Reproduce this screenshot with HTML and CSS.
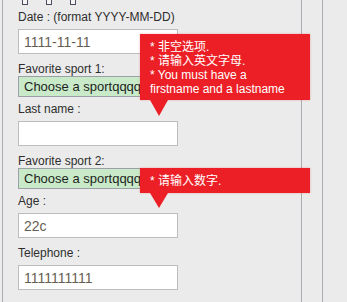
FILE: index.html
```html
<!DOCTYPE html>
<html lang="en">
<head>
<meta charset="utf-8">
<title>Form validation</title>
<link rel="stylesheet" href="styles.css">
</head>
<body>
<div class="page">
  <div class="panel">
    <div class="checks">
      <span class="box"></span><span class="box"></span><span class="box"></span>
    </div>
    <form class="form">
      <div class="field field--first">
        <label class="lbl">Date : (format YYYY-MM-DD)</label>
        <input class="txt" type="text" value="1111-11-11">
      </div>
      <div class="field field--after-input field--select">
        <label class="lbl">Favorite sport 1:</label>
        <select class="sel"><option>Choose a sportqqqqqqqqqqqqqqqqqqqq</option></select>
      </div>
      <div class="field field--after-select">
        <label class="lbl">Last name :</label>
        <input class="txt" type="text" value="">
      </div>
      <div class="field field--after-input field--select">
        <label class="lbl">Favorite sport 2:</label>
        <select class="sel"><option>Choose a sportqqqqqqqqqqqqqqqqqqqq</option></select>
      </div>
      <div class="field field--after-select">
        <label class="lbl">Age :</label>
        <input class="txt" type="text" value="22c">
      </div>
      <div class="field field--after-input">
        <label class="lbl">Telephone :</label>
        <input class="txt" type="text" value="1111111111">
      </div>
    </form>

    <div class="tip tip--name">
      <div class="tip-line">* 非空选项.</div>
      <div class="tip-line">* 请输入英文字母.</div>
      <div class="tip-line">* You must have a</div>
      <div class="tip-line">firstname and a lastname</div>
      <span class="tip-arrow"></span>
    </div>
    <div class="tip tip--age">
      <div class="tip-line">* 请输入数字.</div>
      <span class="tip-arrow tip-arrow--short"></span>
    </div>
  </div>
  <div class="gutter"></div>
</div>
</body>
</html>
```

FILE: styles.css
```css
html, body {
  margin: 0;
  padding: 0;
}

body {
  background: #ebebeb;
  font-family: "Liberation Sans", "Noto Sans CJK SC", sans-serif;
  color: #333;
  overflow: hidden;
}

.page {
  display: flex;
  height: 302px;
}

.panel {
  position: relative;
  box-sizing: border-box;
  width: 300px;
  margin-left: 2px;
  border-left: 1px solid #abacb3;
  border-right: 1px solid #abacb3;
  padding-left: 15px;
}

.gutter {
  box-sizing: border-box;
  width: 21px;
  border-right: 1px solid #abacb3;
}

.checks {
  display: flex;
  gap: 18px;
  padding-left: 4px;
  height: 5px;
}

.box {
  box-sizing: border-box;
  width: 6px;
  height: 5px;
  border: 1px solid #4a4d5e;
  border-top: none;
  background: #f4f4f4;
}

.form {
  display: flex;
  flex-direction: column;
  margin: 0;
}

.field {
  display: flex;
  flex-direction: column;
  align-items: flex-start;
}

.field--first { margin-top: 5px; }
.field--after-input { margin-top: 8px; }
.field--after-select { margin-top: 5px; }

.lbl {
  font-size: 12px;
  line-height: 14px;
  height: 14px;
  color: #2e2e2e;
}

.txt {
  box-sizing: border-box;
  margin: 5px 0 0;
  width: 160px;
  height: 25px;
  padding: 0 5px;
  border: 1px solid #bdbdbd;
  background: #fff;
  font-family: "Liberation Sans", sans-serif;
  font-size: 14px;
  color: #665e52;
  outline: none;
}

.sel {
  appearance: none;
  -webkit-appearance: none;
  box-sizing: border-box;
  margin: 0;
  width: 248px;
  height: 21px;
  padding: 0 5px;
  border: 1px solid #9aa0a6;
  border-radius: 0;
  background: #c8eac8;
  font-family: "Liberation Sans", sans-serif;
  font-size: 13px;
  color: #1e1e1e;
  outline: none;
}

.tip {
  position: absolute;
  left: 137px;
  width: 170px;
  box-sizing: border-box;
  padding: 6px 8px 4px 10px;
  background: #ec1f26;
  box-shadow: 0 0 2px rgba(236, 31, 38, 0.35);
  color: #fff;
  font-family: "Liberation Sans", "Noto Sans CJK SC", sans-serif;
  font-size: 12px;
  line-height: 14px;
}

.tip--name { top: 34px; }
.tip--age { top: 168px; padding-bottom: 5px; }

.tip-line {
  white-space: nowrap;
}

.tip-arrow {
  position: absolute;
  left: 10px;
  top: 100%;
  width: 0;
  height: 0;
  border-left: 9px solid transparent;
  border-right: 9px solid transparent;
  border-top: 16px solid #ec1f26;
}

.tip-arrow--short {
  border-top-width: 15px;
}
```
